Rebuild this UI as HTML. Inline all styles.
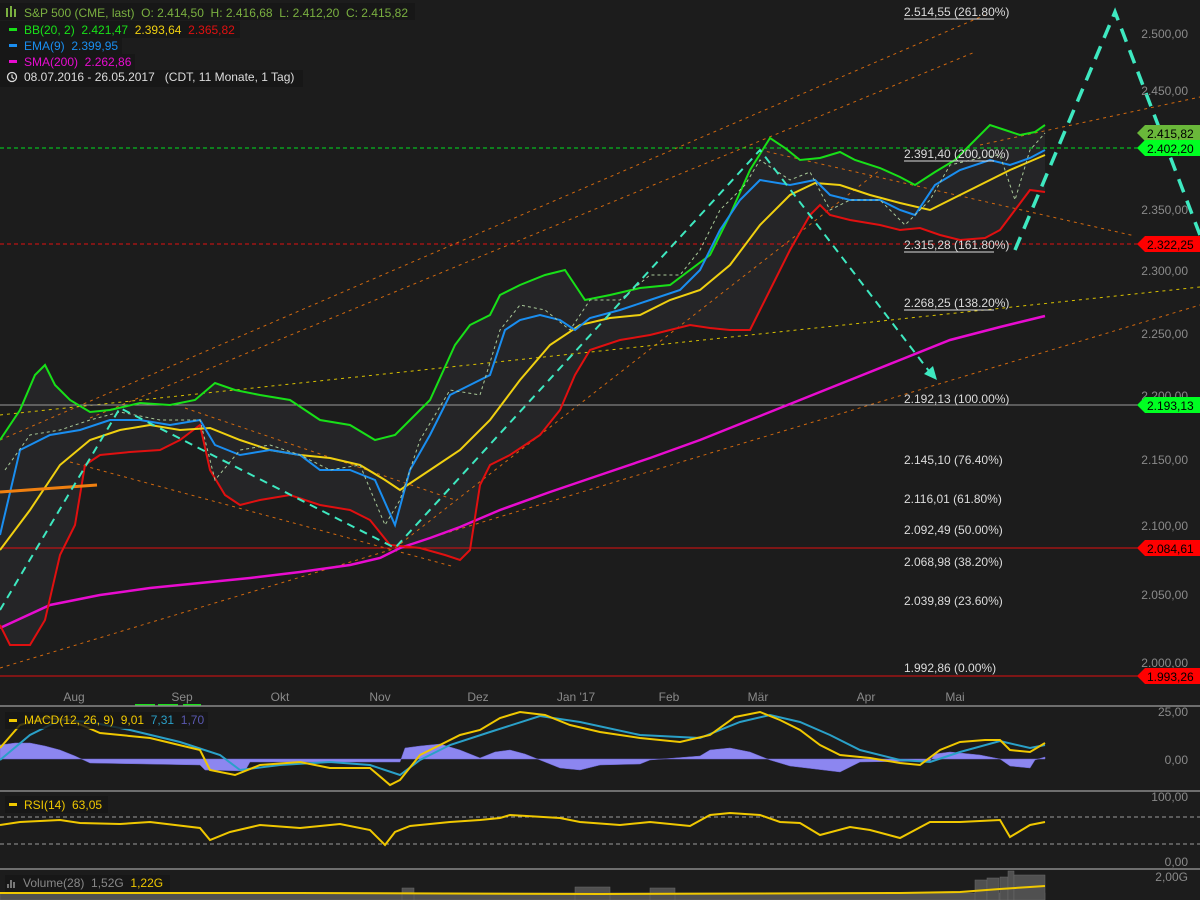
<!DOCTYPE html>
<html><head><meta charset="utf-8"><style>
body{margin:0;background:#1c1c1c;overflow:hidden;}
svg{display:block;font-family:"Liberation Sans",sans-serif;}
text{white-space:pre}
.ax{fill:#8a8a8a;font-size:12px;text-anchor:end}
.fib{fill:#dcdcdc;font-size:12px}
.mo{fill:#8a8a8a;font-size:12px;text-anchor:middle}
</style></head><body>
<svg width="1200" height="900" viewBox="0 0 1200 900" xml:space="preserve">
<rect width="1200" height="900" fill="#1c1c1c"/>
<polygon fill="#252527" points="0,440 20,410 35,375 45,365 55,385 70,400 90,412 110,410 140,403 170,405 195,400 215,383 235,390 260,395 290,400 320,420 350,425 375,440 395,435 410,420 430,400 455,345 470,325 490,315 500,295 520,285 545,275 565,270 585,300 610,295 640,288 670,285 690,270 710,255 730,215 750,170 770,138 785,148 800,160 820,158 840,152 855,160 880,168 900,177 915,185 935,172 955,160 975,140 990,125 1005,130 1020,135 1035,132 1045,125 1045,192 1030,190 1015,210 1000,230 985,238 960,240 940,235 920,228 900,230 880,225 850,220 830,215 820,205 810,215 790,250 770,290 750,330 730,330 710,328 690,325 670,330 650,335 620,340 590,350 575,375 560,410 540,435 510,455 490,465 480,485 470,550 460,560 445,555 420,548 390,545 370,520 350,510 320,505 290,495 260,500 240,505 225,495 210,470 200,425 180,440 160,450 130,452 100,455 85,465 75,525 60,555 45,620 30,645 10,645 0,625"/>
<g stroke="#d0680f" stroke-width="1" stroke-dasharray="3,4" fill="none">
<line x1="0" y1="668" x2="1200" y2="305"/>
<line x1="0" y1="440" x2="985" y2="15"/>
<line x1="90" y1="418" x2="975" y2="52"/>
<line x1="70" y1="462" x2="455" y2="567"/>
<line x1="185" y1="408" x2="455" y2="500"/>
<line x1="395" y1="548" x2="880" y2="170"/>
<line x1="760" y1="150" x2="1135" y2="236"/>
<line x1="980" y1="145" x2="1200" y2="97"/>
</g>
<line x1="0" y1="415" x2="1200" y2="287" stroke="#d8c000" stroke-width="1" stroke-dasharray="3,4"/>
<line x1="0" y1="148" x2="1140" y2="148" stroke="#00e020" stroke-dasharray="4,3"/>
<line x1="0" y1="244" x2="1140" y2="244" stroke="#e01010" stroke-dasharray="4,3"/>
<line x1="0" y1="405" x2="1140" y2="405" stroke="#9a9a9a"/>
<line x1="0" y1="548" x2="1140" y2="548" stroke="#e01010"/>
<line x1="0" y1="676" x2="1140" y2="676" stroke="#e01010"/>
<polyline fill="none" stroke="#e80cd0" stroke-width="2.5" points="0,628 50,605 100,595 150,588 200,583 250,578 300,572 350,565 380,558 400,548 430,538 460,527 500,510 550,492 600,475 650,458 700,440 750,420 800,400 850,380 900,360 950,340 1000,327 1045,316"/>
<polyline fill="none" stroke="#e01010" stroke-width="2" points="0,625 10,645 30,645 45,620 60,555 75,525 85,465 100,455 130,452 160,450 180,440 200,425 210,470 225,495 240,505 260,500 290,495 320,505 350,510 370,520 390,545 420,548 445,555 460,560 470,550 480,485 490,465 510,455 540,435 560,410 575,375 590,350 620,340 650,335 670,330 690,325 710,328 730,330 750,330 770,290 790,250 810,215 820,205 830,215 850,220 880,225 900,230 920,228 940,235 960,240 985,238 1000,230 1015,210 1030,190 1045,192"/>
<polyline fill="none" stroke="#18e018" stroke-width="2" points="0,440 20,410 35,375 45,365 55,385 70,400 90,412 110,410 140,403 170,405 195,400 215,383 235,390 260,395 290,400 320,420 350,425 375,440 395,435 410,420 430,400 455,345 470,325 490,315 500,295 520,285 545,275 565,270 585,300 610,295 640,288 670,285 690,270 710,255 730,215 750,170 770,138 785,148 800,160 820,158 840,152 855,160 880,168 900,177 915,185 935,172 955,160 975,140 990,125 1005,130 1020,135 1035,132 1045,125"/>
<polyline fill="none" stroke="#f0d010" stroke-width="2" points="0,550 30,510 60,465 90,440 120,430 150,425 180,430 210,428 240,440 270,450 300,455 330,458 360,465 385,480 400,490 430,470 460,450 490,420 520,380 550,345 580,325 610,318 640,315 670,300 700,290 730,265 760,225 790,195 815,183 840,185 870,195 900,203 930,210 960,195 990,180 1010,170 1045,155"/>
<polyline fill="none" stroke="#1a8ef0" stroke-width="2" points="0,535 20,450 50,435 80,430 110,420 140,420 170,425 200,420 215,445 240,455 270,450 300,455 320,470 350,470 375,480 395,525 410,470 430,435 450,395 470,385 490,375 505,330 520,320 540,315 560,320 575,330 590,318 620,310 650,300 680,290 700,270 720,230 740,200 760,180 790,185 815,180 830,195 850,200 880,200 900,210 915,215 935,185 960,170 990,160 1010,165 1030,158 1045,150"/>
<line x1="0" y1="492" x2="97" y2="485" stroke="#f08010" stroke-width="3"/>
<polyline fill="none" stroke="#a8c898" stroke-width="1" stroke-dasharray="3,3" points="5,470 30,435 60,430 90,420 120,412 160,420 200,420 215,480 240,450 270,445 300,455 330,470 360,465 385,525 400,500 420,440 450,390 480,395 500,330 520,305 545,310 570,330 590,300 620,300 650,275 680,275 700,250 720,210 745,185 760,160 790,180 810,172 830,210 850,200 880,200 905,225 930,200 950,165 980,158 1000,155 1015,200 1030,150 1045,133"/>
<g stroke="#3ee8c0" fill="none" stroke-width="2" stroke-dasharray="8,6">
<polyline points="0,610 120,408 395,548 760,150 932,375"/>
</g>
<polygon points="937,380 924,374 933,366" fill="#3ee8c0"/>
<polyline points="1015,250 1115,12 1200,235" stroke="#3ee8c0" stroke-width="3.5" fill="none" stroke-dasharray="14,9"/>
<g class="fib">
<text x="904" y="16">2.514,55 (261.80%)</text><line x1="904" y1="19" x2="994" y2="19" stroke="#dcdcdc"/>
<text x="904" y="158">2.391,40 (200.00%)</text><line x1="904" y1="161" x2="994" y2="161" stroke="#dcdcdc"/>
<text x="904" y="249">2.315,28 (161.80%)</text><line x1="904" y1="252" x2="994" y2="252" stroke="#dcdcdc"/>
<text x="904" y="307">2.268,25 (138.20%)</text><line x1="904" y1="310" x2="994" y2="310" stroke="#dcdcdc"/>
<text x="904" y="403">2.192,13 (100.00%)</text>
<text x="904" y="464">2.145,10 (76.40%)</text>
<text x="904" y="503">2.116,01 (61.80%)</text>
<text x="904" y="534">2.092,49 (50.00%)</text>
<text x="904" y="566">2.068,98 (38.20%)</text>
<text x="904" y="605">2.039,89 (23.60%)</text>
<text x="904" y="672">1.992,86 (0.00%)</text>
</g>
<g class="ax">
<text x="1188" y="38">2.500,00</text><text x="1188" y="95">2.450,00</text>
<text x="1188" y="214">2.350,00</text><text x="1188" y="275">2.300,00</text>
<text x="1188" y="338">2.250,00</text><text x="1188" y="400">2.200,00</text>
<text x="1188" y="464">2.150,00</text><text x="1188" y="530">2.100,00</text>
<text x="1188" y="599">2.050,00</text><text x="1188" y="667">2.000,00</text>
<text x="1188" y="716">25,00</text><text x="1188" y="764">0,00</text>
<text x="1188" y="801">100,00</text><text x="1188" y="866">0,00</text>
<text x="1188" y="881">2,00G</text>
</g>
<g font-size="12">
<polygon points="1137,133 1145,125 1200,125 1200,141 1145,141" fill="#6ab83a"/><text x="1147" y="138">2.415,82</text>
<polygon points="1137,148 1145,140 1200,140 1200,156 1145,156" fill="#00ff22"/><text x="1147" y="153">2.402,20</text>
<polygon points="1137,244 1145,236 1200,236 1200,252 1145,252" fill="#ff0000"/><text x="1147" y="249">2.322,25</text>
<polygon points="1137,405 1145,397 1200,397 1200,413 1145,413" fill="#00ff22"/><text x="1147" y="410">2.193,13</text>
<polygon points="1137,548 1145,540 1200,540 1200,556 1145,556" fill="#ff0000"/><text x="1147" y="553">2.084,61</text>
<polygon points="1137,676 1145,668 1200,668 1200,684 1145,684" fill="#ff0000"/><text x="1147" y="681">1.993,26</text>
</g>
<g class="mo">
<text x="74" y="701">Aug</text><text x="182" y="701">Sep</text><text x="280" y="701">Okt</text><text x="380" y="701">Nov</text><text x="478" y="701">Dez</text><text x="576" y="701">Jan '17</text><text x="669" y="701">Feb</text><text x="758" y="701">Mär</text><text x="866" y="701">Apr</text><text x="955" y="701">Mai</text>
</g>
<rect x="135" y="704" width="20" height="2" fill="#18e018"/><rect x="158" y="704" width="20" height="2" fill="#18e018"/><rect x="183" y="704" width="18" height="2" fill="#18e018"/>
<line x1="0" y1="706" x2="1200" y2="706" stroke="#8a8a8a" stroke-width="1.5"/>
<line x1="0" y1="791" x2="1200" y2="791" stroke="#8a8a8a" stroke-width="1.5"/>
<line x1="0" y1="869" x2="1200" y2="869" stroke="#8a8a8a" stroke-width="1.5"/>
<polygon fill="#8c86f0" stroke="#6a64d0" stroke-width="0.5" points="0,759 0,745 15,743 30,743 45,746 60,750 75,756 90,763 200,765 205,770 245,771 250,762 400,762 405,748 420,746 440,744 460,750 480,758 495,752 510,750 525,754 540,760 560,768 580,770 600,765 640,764 650,760 700,756 710,750 730,748 750,752 770,760 790,766 840,772 860,762 930,761 935,754 950,752 980,755 1000,759 1010,766 1030,768 1035,760 1045,757 1045,759"/>
<polyline fill="none" stroke="#2aa0c8" stroke-width="2" points="0,760 30,735 60,720 90,722 130,730 180,742 220,755 240,770 280,765 330,762 370,765 400,775 420,760 450,745 490,732 540,716 580,722 640,735 700,738 740,722 770,715 800,722 830,735 860,750 900,760 930,762 960,752 1000,741 1030,748 1045,745"/>
<polyline fill="none" stroke="#f0c800" stroke-width="2" points="0,748 20,725 45,718 70,720 100,733 150,738 200,750 210,770 235,775 260,765 300,762 330,768 370,768 390,785 400,780 420,755 440,745 460,735 480,730 500,718 520,712 545,715 570,725 600,732 640,738 680,742 710,735 735,717 760,712 780,720 800,730 820,745 840,755 870,758 900,763 920,765 940,750 960,742 985,740 1000,740 1010,750 1030,752 1045,743"/>
<line x1="0" y1="817" x2="1200" y2="817" stroke="#9a9a9a" stroke-dasharray="4,3"/>
<line x1="0" y1="844" x2="1200" y2="844" stroke="#9a9a9a" stroke-dasharray="4,3"/>
<polyline fill="none" stroke="#f0c800" stroke-width="2" points="0,825 20,822 60,820 80,823 120,824 150,822 200,828 210,840 230,832 260,825 300,828 340,824 370,830 385,845 395,832 410,826 450,822 480,820 500,818 510,815 560,818 580,822 620,825 650,822 690,826 710,815 730,813 760,815 780,822 800,823 820,835 850,827 870,830 900,838 930,822 960,822 980,821 1000,820 1010,837 1030,825 1045,822"/>
<g fill="#505050" stroke="#6a6a6a" stroke-width="0.5">
<rect x="0" y="893" width="1045" height="7"/>
<rect x="402" y="888" width="12" height="12"/><rect x="575" y="887" width="35" height="13"/><rect x="650" y="888" width="25" height="12"/>
<rect x="975" y="880" width="12" height="20"/><rect x="987" y="878" width="12" height="22"/><rect x="1000" y="877" width="8" height="23"/><rect x="1008" y="871" width="6" height="29"/><rect x="1014" y="875" width="31" height="25"/>
</g>
<polyline fill="none" stroke="#f0c800" stroke-width="2" points="0,893 300,893 600,894 900,893 960,892 1000,889 1030,887 1045,886"/>
<g font-size="12">
<rect x="0" y="3" width="415" height="17" fill="#171717"/>
<g fill="#7ab040"><rect x="6" y="8" width="2" height="9"/><rect x="10" y="6" width="2" height="11"/><rect x="14" y="9" width="2" height="8"/></g>
<text x="24" y="17" fill="#7ab040">S&amp;P 500 (CME, last)  O: 2.414,50  H: 2.416,68  L: 2.412,20  C: 2.415,82</text>
<rect x="0" y="21" width="240" height="17" fill="#171717"/>
<rect x="9" y="28" width="8" height="3" fill="#18e018"/>
<text x="24" y="34" fill="#18e018">BB(20, 2)  2.421,47  <tspan fill="#f0d010">2.393,64</tspan>  <tspan fill="#e01010">2.365,82</tspan></text>
<rect x="0" y="38" width="122" height="17" fill="#171717"/>
<rect x="9" y="44" width="8" height="3" fill="#1a8ef0"/>
<text x="24" y="50" fill="#1a8ef0">EMA(9)  2.399,95</text>
<rect x="0" y="54" width="135" height="17" fill="#171717"/>
<rect x="9" y="60" width="8" height="3" fill="#e80cd0"/>
<text x="24" y="66" fill="#e80cd0">SMA(200)  2.262,86</text>
<rect x="0" y="70" width="303" height="17" fill="#171717"/>
<circle cx="12" cy="77" r="4.5" fill="none" stroke="#dcdcdc" stroke-width="1.3"/><path d="M12 74.5V77.5L14 79" stroke="#dcdcdc" fill="none" stroke-width="1.2"/>
<text x="24" y="81" fill="#dcdcdc">08.07.2016 - 26.05.2017   (CDT, 11 Monate, 1 Tag)</text>
<rect x="5" y="712" width="203" height="17" fill="#171717" fill-opacity="0.8"/>
<rect x="9" y="719" width="8" height="3" fill="#f0c800"/>
<text x="24" y="724" fill="#f0c800">MACD(12, 26, 9)  9,01  <tspan fill="#2aa0c8">7,31</tspan>  <tspan fill="#5a58b0">1,70</tspan></text>
<rect x="5" y="796" width="103" height="17" fill="#171717"/>
<rect x="9" y="803" width="8" height="3" fill="#f0c800"/>
<text x="24" y="809" fill="#f0c800">RSI(14)  63,05</text>
<rect x="5" y="875" width="165" height="17" fill="#171717"/>
<g fill="#777"><rect x="7" y="884" width="2" height="4"/><rect x="10" y="880" width="2" height="8"/><rect x="13" y="882" width="2" height="6"/></g>
<text x="23" y="887" fill="#888">Volume(28)  1,52G  <tspan fill="#f0c800">1,22G</tspan></text>
</g>
</svg>
</body></html>
